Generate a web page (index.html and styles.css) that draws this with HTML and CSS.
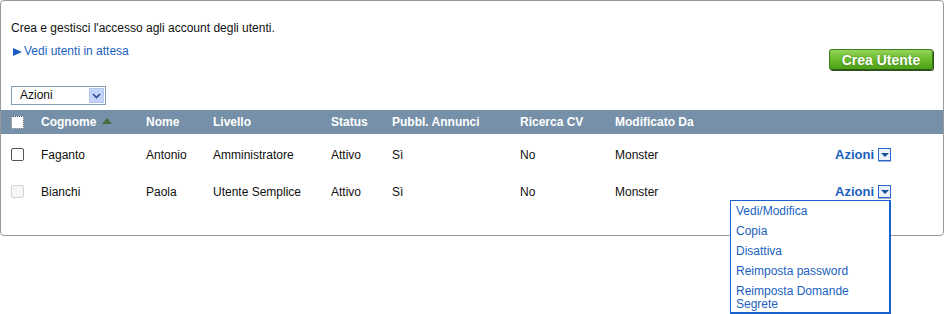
FILE: index.html
```html
<!DOCTYPE html>
<html lang="it">
<head>
    <meta charset="UTF-8">
    <title>Gestione Utenti</title>
    <link rel="stylesheet" href="styles.css">
</head>
<body>
    <div class="panel">
        <div class="top">
            <div class="intro">
                <p>Crea e gestisci l'accesso agli account degli utenti.</p>
                <a href="#" class="pending"><span class="tri"></span>Vedi utenti in attesa</a>
            </div>
            <button class="btn-create">Crea Utente</button>
        </div>

        <div class="toolbar">
            <div class="select-box">
                <span>Azioni</span>
                <span class="select-arrow">
                    <svg width="9" height="6" viewBox="0 0 9 6"><path d="M1 1 L4.5 4.5 L8 1" fill="none" stroke="#2a4f8f" stroke-width="1.6"/></svg>
                </span>
            </div>
        </div>

        <table class="users">
            <colgroup>
                <col style="width: 40px">
                <col style="width: 105px">
                <col style="width: 67px">
                <col style="width: 118px">
                <col style="width: 61px">
                <col style="width: 128px">
                <col style="width: 95px">
                <col style="width: 150px">
                <col>
            </colgroup>
            <thead>
                <tr>
                    <th class="cb-cell"><span class="cb cb-head"></span></th>
                    <th>Cognome <span class="sort"></span></th>
                    <th>Nome</th>
                    <th>Livello</th>
                    <th>Status</th>
                    <th>Pubbl. Annunci</th>
                    <th>Ricerca CV</th>
                    <th>Modificato Da</th>
                    <th></th>
                </tr>
            </thead>
            <tbody>
                <tr>
                    <td class="cb-cell"><span class="cb"></span></td>
                    <td>Faganto</td>
                    <td>Antonio</td>
                    <td>Amministratore</td>
                    <td>Attivo</td>
                    <td>Sì</td>
                    <td>No</td>
                    <td>Monster</td>
                    <td class="act-cell">
                        <span class="actions">Azioni <span class="act-toggle"></span></span>
                    </td>
                </tr>
                <tr>
                    <td class="cb-cell"><span class="cb cb-off"></span></td>
                    <td>Bianchi</td>
                    <td>Paola</td>
                    <td>Utente Semplice</td>
                    <td>Attivo</td>
                    <td>Sì</td>
                    <td>No</td>
                    <td>Monster</td>
                    <td class="act-cell">
                        <span class="actions">Azioni <span class="act-toggle"></span></span>
                    </td>
                </tr>
            </tbody>
        </table>

        <ul class="menu">
            <li><a href="#">Vedi/Modifica</a></li>
            <li><a href="#">Copia</a></li>
            <li><a href="#">Disattiva</a></li>
            <li><a href="#">Reimposta password</a></li>
            <li><a href="#">Reimposta Domande Segrete</a></li>
        </ul>
    </div>
</body>
</html>
```

FILE: styles.css
```css
* {
    box-sizing: border-box;
    margin: 0;
    padding: 0;
}
html, body {
    min-height: 314px;
}
body {
    font-family: "Liberation Sans", Arial, sans-serif;
    font-size: 12px;
    color: #111;
    background: #fff;
}
a {
    color: #1b5fbf;
    text-decoration: none;
}
.panel {
    position: relative;
    width: 944px;
    height: 236px;
    border: 1px solid #999;
    border-radius: 4px;
}
.top {
    display: flex;
    justify-content: space-between;
    padding: 0 10px;
}
.intro p {
    margin-top: 20px;
    line-height: 15px;
}
.pending {
    display: inline-flex;
    align-items: center;
    margin: 8px 0 0 2px;
    line-height: 15px;
}
.tri {
    width: 0;
    height: 0;
    margin-right: 2px;
    border-left: 9px solid #1b5fbf;
    border-top: 4px solid transparent;
    border-bottom: 4px solid transparent;
}
.btn-create {
    margin-top: 48px;
    width: 104px;
    height: 21px;
    border: 1px solid #3d7f1c;
    border-bottom-color: #2b5c12;
    border-radius: 3px;
    background: linear-gradient(#94d45a 0%, #6cbb2c 50%, #4c9f18 100%);
    box-shadow: 1px 1px 0 #2d4d1c;
    color: #fff;
    font-family: "Liberation Sans", Arial, sans-serif;
    font-size: 14px;
    font-weight: bold;
    text-shadow: 0 0 2px #3a7a16;
}
.toolbar {
    padding: 16px 10px 5px;
}
.select-box {
    display: flex;
    align-items: center;
    justify-content: space-between;
    width: 95px;
    height: 19px;
    border: 1px solid #7f9db9;
    padding: 1px 1px 1px 8px;
    line-height: 15px;
}
.select-arrow {
    display: flex;
    align-items: center;
    justify-content: center;
    width: 15px;
    height: 15px;
    background: #c3d3fa;
    border: 1px solid #b6c7ef;
}
.users {
    width: 942px;
    border-collapse: collapse;
    table-layout: fixed;
}
.users th {
    height: 24px;
    background: #7590a8;
    color: #fff;
    font-weight: bold;
    text-align: left;
    padding: 0;
}
.users td {
    height: 37px;
    padding: 4px 0 0;
}
.users .cb-cell {
    padding-left: 10px;
}
.cb {
    display: block;
    width: 13px;
    height: 13px;
    border: 1px solid #555;
    border-radius: 2px;
    background: #fff;
}
.cb-head {
    border: 1px dotted #3a4a5a;
}
.cb-off {
    border-color: #d4d4d4;
    background: #f6f6f6;
}
.sort {
    display: inline-block;
    width: 0;
    height: 0;
    margin-left: 2px;
    vertical-align: 2px;
    border-left: 5px solid transparent;
    border-right: 5px solid transparent;
    border-bottom: 6px solid #4c6b3c;
}
.act-cell {
    text-align: right;
    padding-right: 52px !important;
}
.actions {
    display: inline-flex;
    align-items: center;
    gap: 4px;
    color: #1b5fbf;
    font-weight: bold;
    font-size: 13px;
}
.act-toggle {
    position: relative;
    width: 13px;
    height: 13px;
    border: 1px solid #2a6ad0;
    background: #eef2f8;
    box-shadow: 0 1px 0 #a0b4d0;
}
.act-toggle::after {
    content: "";
    position: absolute;
    left: 2px;
    top: 4px;
    border-left: 4px solid transparent;
    border-right: 4px solid transparent;
    border-top: 4px solid #1a4f9f;
}
.menu {
    position: absolute;
    top: 199px;
    left: 729px;
    width: 161px;
    list-style: none;
    background: #fff;
    border: 2px solid #1a63cc;
    border-width: 1px 2px 2px 1px;
    font-size: 12px;
    z-index: 5;
}
.menu li {
    padding: 4px 5px 3px;
    line-height: 13px;
}
.menu li:last-child {
    padding-bottom: 1px;
}
.menu a {
    color: #1b5fbf;
}
```
